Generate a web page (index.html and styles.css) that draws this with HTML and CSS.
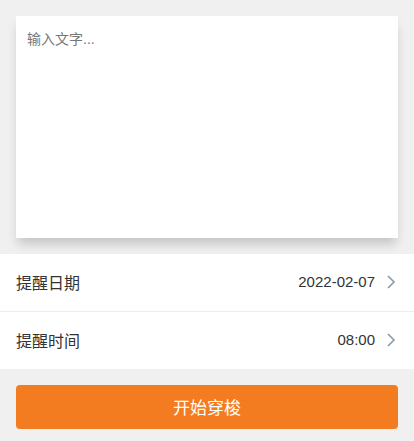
FILE: index.html
```html
<!DOCTYPE html>
<html lang="zh-CN">
<head>
    <meta charset="UTF-8">
    <meta name="viewport" content="width=device-width, initial-scale=1.0">
    <title>提醒</title>
    <link rel="stylesheet" href="styles.css">
</head>
<body>
    <div class="page">
        <div class="note-box">
            <textarea class="note-input" placeholder="输入文字..."></textarea>
        </div>

        <div class="cell-group">
            <div class="cell">
                <span class="cell-label">提醒日期</span>
                <span class="cell-value">2022-02-07</span>
                <svg class="cell-arrow" width="10" height="16" viewBox="0 0 10 16"><path d="M2 2 L8 8 L2 14" fill="none" stroke="#8a9aa5" stroke-width="1.6"/></svg>
            </div>
            <div class="cell">
                <span class="cell-label">提醒时间</span>
                <span class="cell-value">08:00</span>
                <svg class="cell-arrow" width="10" height="16" viewBox="0 0 10 16"><path d="M2 2 L8 8 L2 14" fill="none" stroke="#8a9aa5" stroke-width="1.6"/></svg>
            </div>
        </div>

        <div class="actions">
            <button type="button" class="btn-start">开始穿梭</button>
        </div>
    </div>
</body>
</html>
```

FILE: styles.css
```css
body {
    margin: 0;
    padding: 0;
    background-color: #f0f0f0;
    font-family: "Liberation Sans", Arial, "Noto Sans CJK SC", sans-serif;
    color: #333;
}

.page {
    padding-top: 16px;
}

.note-box {
    margin: 0 16px;
    height: 222px;
    background-color: #fff;
    box-shadow: 0 8px 10px -2px rgba(0, 0, 0, 0.18);
}

.note-input {
    display: block;
    width: 100%;
    height: 100%;
    box-sizing: border-box;
    padding: 13px 11px;
    border: none;
    outline: none;
    resize: none;
    background: transparent;
    font-family: inherit;
    font-size: 14px;
    line-height: 20px;
    color: #333;
}

.note-input::placeholder {
    color: #777;
}

.cell-group {
    margin-top: 16px;
    background-color: #fff;
}

.cell {
    display: flex;
    align-items: center;
    height: 57px;
    padding: 0 18px 2px 16px;
    box-sizing: border-box;
    font-size: 16px;
}

.cell + .cell {
    border-top: 1px solid #ececec;
    height: 58px;
}

.cell-label {
    flex: 1;
    color: #333;
}

.cell-value {
    color: #333;
    font-size: 15px;
    margin-right: 11px;
}

.cell-arrow {
    display: block;
}

.actions {
    padding: 16px;
}

.btn-start {
    display: block;
    width: 100%;
    height: 44px;
    padding-bottom: 2px;
    border: none;
    border-radius: 4px;
    background-color: #f47c20;
    color: #fff;
    font-family: inherit;
    font-size: 17px;
    cursor: pointer;
}
```
